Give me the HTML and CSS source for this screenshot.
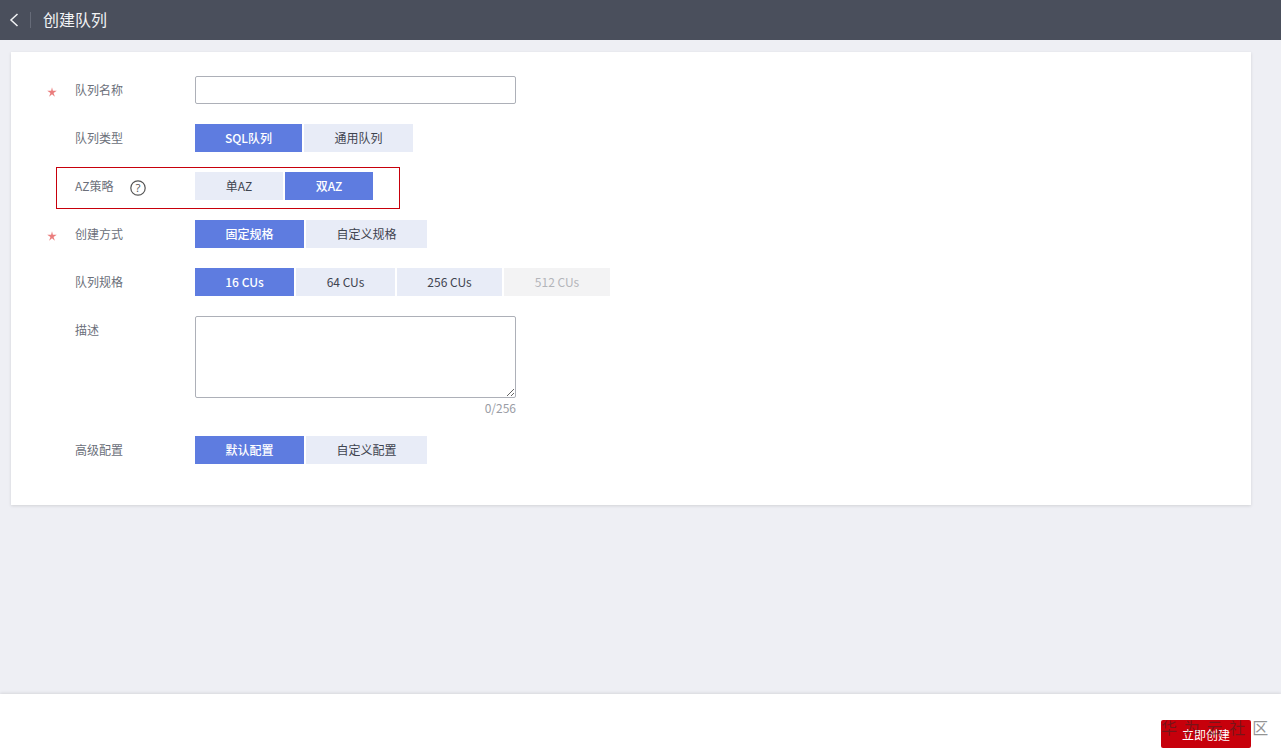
FILE: index.html
```html
<!DOCTYPE html>
<html lang="zh-CN">
<head>
<meta charset="utf-8">
<title>创建队列</title>
<link rel="stylesheet" href="styles.css">
</head>
<body>
<div class="page">
  <header class="topbar">
    <button class="back" aria-label="返回">
      <svg width="10" height="14" viewBox="0 0 10 14"><path d="M8.5 1 L2 7 L8.5 13" fill="none" stroke="#f2f3f5" stroke-width="1.5"/></svg>
    </button>
    <span class="divider"></span>
    <h1 class="title">创建队列</h1>
  </header>

  <main class="content">
    <form class="card">
      <div class="row">
        <span class="star"><svg width="10" height="10" viewBox="0 0 9 9"><path d="M4.5 0.2 L5.3 3.4 L8.8 3.4 L5.9 5.3 L7.1 8.7 L4.5 6.5 L1.9 8.7 L3.1 5.3 L0.2 3.4 L3.7 3.4 Z" fill="#ea7d7d"/></svg></span>
        <label class="label">队列名称</label>
        <input class="input" type="text">
      </div>
      <div class="row">
        <span class="star"></span>
        <label class="label">队列类型</label>
        <div class="seg">
          <button type="button" class="opt on w107">SQL队列</button>
          <button type="button" class="opt w109">通用队列</button>
        </div>
      </div>
      <div class="row boxed">
        <span class="redbox"></span>
        <span class="star"></span>
        <label class="label">AZ策略
          <svg class="help" width="16" height="16" viewBox="0 0 16 16"><circle cx="8" cy="8" r="7.2" fill="none" stroke="#555" stroke-width="1.2"/><text x="8" y="12" text-anchor="middle" class="helpq">?</text></svg>
        </label>
        <div class="seg">
          <button type="button" class="opt w88">单AZ</button>
          <button type="button" class="opt on w88">双AZ</button>
        </div>
      </div>
      <div class="row">
        <span class="star"><svg width="10" height="10" viewBox="0 0 9 9"><path d="M4.5 0.2 L5.3 3.4 L8.8 3.4 L5.9 5.3 L7.1 8.7 L4.5 6.5 L1.9 8.7 L3.1 5.3 L0.2 3.4 L3.7 3.4 Z" fill="#ea7d7d"/></svg></span>
        <label class="label">创建方式</label>
        <div class="seg">
          <button type="button" class="opt on w109">固定规格</button>
          <button type="button" class="opt w121">自定义规格</button>
        </div>
      </div>
      <div class="row">
        <span class="star"></span>
        <label class="label">队列规格</label>
        <div class="seg">
          <button type="button" class="opt on w99">16 CUs</button>
          <button type="button" class="opt w99">64 CUs</button>
          <button type="button" class="opt w105">256 CUs</button>
          <button type="button" class="opt off w106">512 CUs</button>
        </div>
      </div>
      <div class="row rowtall">
        <span class="star"></span>
        <label class="label">描述</label>
        <div class="areawrap">
          <textarea class="area"></textarea>
          <div class="count">0/256</div>
        </div>
      </div>
      <div class="row">
        <span class="star"></span>
        <label class="label">高级配置</label>
        <div class="seg">
          <button type="button" class="opt on w109">默认配置</button>
          <button type="button" class="opt w121">自定义配置</button>
        </div>
      </div>
    </form>
  </main>

  <footer class="footer">
    <button class="submit">立即创建</button>
    <span class="mark">华 为 云 社 区</span>
  </footer>
</div>
</body>
</html>
```
FILE: styles.css
```css
* { box-sizing: border-box; }
html, body { margin: 0; height: 100%; }
body {
  font-family: "Noto Sans CJK SC", "Open Sans", sans-serif;
  font-size: 12px;
  color: #252b3a;
  overflow: hidden;
}
.page {
  width: 1281px;
  height: 755px;
  display: flex;
  flex-direction: column;
  background: #eeeff4;
}
.topbar {
  height: 40px;
  flex: none;
  background: #4a4f5c;
  display: flex;
  align-items: center;
  color: #f2f3f5;
}
.back {
  border: 0;
  background: none;
  padding: 0;
  margin-left: 9px;
  width: 12px;
  height: 14px;
  display: flex;
}
.divider {
  width: 1px;
  height: 16px;
  background: #666b78;
  margin-left: 9px;
}
.title {
  margin: -3px 0 0 12px;
  font-size: 16px;
  font-weight: 400;
  line-height: 20px;
}
.content {
  flex: 1;
  padding: 12px 30px 0 11px;
}
.card {
  width: 1240px;
  height: 453px;
  background: #fff;
  box-shadow: 0 1px 3px rgba(0, 0, 0, .12);
  padding: 24px 0 0 36px;
  display: flex;
  flex-direction: column;
  gap: 20px;
}
.row {
  display: flex;
  position: relative;
  min-height: 28px;
  align-items: flex-start;
}
.rowtall { min-height: 100px; height: 100px; }
.star {
  width: 28px;
  height: 28px;
  flex: none;
  display: flex;
  align-items: center;
  padding: 3px 0 0 0;
}
.label {
  width: 120px;
  color: #6b6f7a;
  line-height: 28px;
  display: flex;
  align-items: center;
}
.help { margin-left: 17px; margin-top: 3px; }
.helpq { font-size: 11.5px; fill: #555; font-family: "Open Sans", sans-serif; }
.redbox {
  position: absolute;
  left: 9px;
  top: -5px;
  width: 344px;
  height: 42px;
  border: 1px solid #c7000b;
  pointer-events: none;
}
.input {
  width: 321px;
  height: 28px;
  border: 1px solid #adb0b8;
  border-radius: 2px;
  background: #fff;
}
.seg { display: flex; gap: 2px; }
.opt {
  height: 28px;
  border: 0;
  padding: 0;
  font: inherit;
  line-height: 28px;
  background: #e8ecf7;
  color: #3f4450;
}
.opt.on { background: #5e7ce0; color: #fff; font-weight: 500; }
.opt.off { background: #f3f3f4; color: #b3b5ba; }
.w88 { width: 88px; }
.w99 { width: 99px; }
.w105 { width: 105px; }
.w106 { width: 106px; }
.w107 { width: 107px; }
.w109 { width: 109px; }
.w121 { width: 121px; }
.areawrap { width: 321px; }
.area {
  display: block;
  width: 321px;
  height: 82px;
  border: 1px solid #adb0b8;
  border-radius: 2px;
  background: #fff;
}
.count {
  text-align: right;
  color: #9a9da5;
  line-height: 18px;
  margin-top: 1px;
}
.footer {
  height: 61px;
  flex: none;
  background: #fff;
  box-shadow: 0 -1px 3px rgba(0, 0, 0, .1);
  position: relative;
  display: flex;
  justify-content: flex-end;
  padding: 26px 30px 0 0;
}
.submit {
  width: 90px;
  height: 28px;
  border: 0;
  border-radius: 2px;
  background: #c7000b;
  color: #fff;
  font: inherit;
}
.mark {
  position: absolute;
  left: 1161px;
  top: 21px;
  font-size: 16px;
  line-height: 24px;
  color: rgba(40, 40, 40, .5);
  white-space: nowrap;
  word-spacing: 3.2px;
  pointer-events: none;
}
```
